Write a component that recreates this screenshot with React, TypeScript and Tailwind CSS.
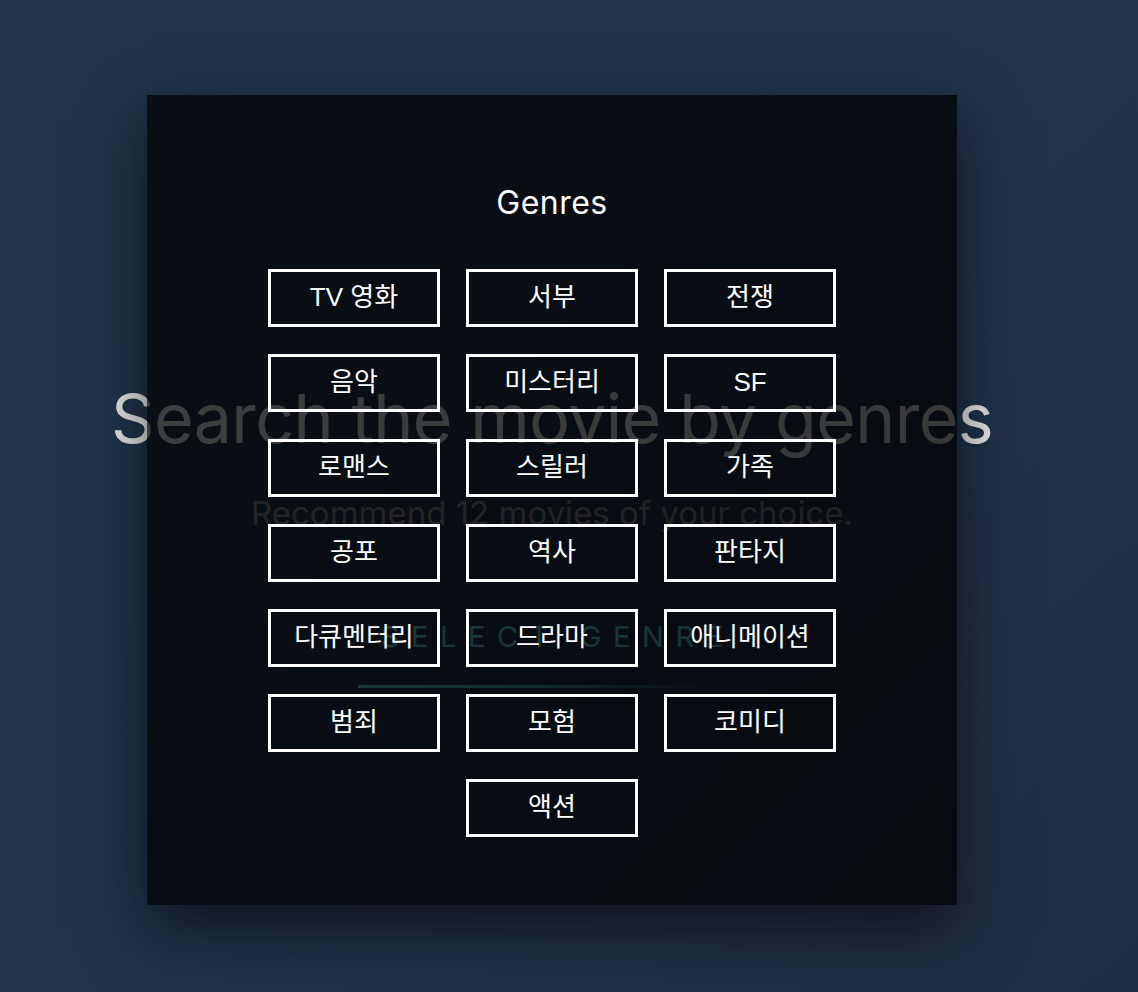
import React from "react";

const genres = [
    "TV 영화", "서부", "전쟁",
    "음악", "미스터리", "SF",
    "로맨스", "스릴러", "가족",
    "공포", "역사", "판타지",
    "다큐멘터리", "드라마", "애니메이션",
    "범죄", "모험", "코미디",
    "액션"
];

function GenreModal() {
    return (
        <div className="absolute left-[147px] top-[95px] w-[810px] h-[810px] bg-gradient-to-br from-[#000000b8] to-[#000000c4] shadow-[0_24px_60px_rgba(0,0,0,0.6)] flex flex-col items-center pt-[88px]">
            <h2 className="text-[32px] leading-[40px] text-white font-['Inter','Noto_Sans_CJK_KR',sans-serif] tracking-[0.5px]">
                Genres
            </h2>
            <div className="mt-[46px] grid grid-cols-[172px_172px_172px] gap-x-[26px] gap-y-[27px]">
                {genres.map((g, i) => (
                    <button
                        key={g}
                        className={
                            "h-[58px] border-[3px] border-white text-white text-[26px] leading-none pb-[3px] whitespace-nowrap font-['Liberation_Sans','Noto_Sans_CJK_KR',sans-serif] " +
                            (i === genres.length - 1 ? "col-start-2" : "")
                        }
                    >
                        {g}
                    </button>
                ))}
            </div>
        </div>
    );
}

export default function App() {
    return (
        <div className="relative min-h-[992px] w-full overflow-hidden bg-gradient-to-br from-[#223448] via-[#21344c] to-[#202d42] font-['Inter',sans-serif]">
            <div className="flex flex-col items-center pr-[34px] pt-[378px]">
                <h1 className="text-[68px] leading-[80px] text-[#e6e6e6] tracking-[-0.6px]">
                    Search the movie by genres
                </h1>
                <p className="mt-[35px] text-[33px] leading-[40px] text-[#8a8a8a]">
                    Recommend 12 movies of your choice.
                </p>
                <div className="mt-[88px] flex flex-col items-center">
                    <span className="text-[29px] leading-[32px] tracking-[0.4em] pl-[0.4em] text-[#6ad6dc]">
                        SELECT GENRE
                    </span>
                    <div className="mt-[32px] mr-[36px] h-[3px] w-[352px] bg-gradient-to-r from-[#6ad6dc] via-[#50b0b6] to-transparent" />
                </div>
            </div>
            <GenreModal />
        </div>
    );
}
